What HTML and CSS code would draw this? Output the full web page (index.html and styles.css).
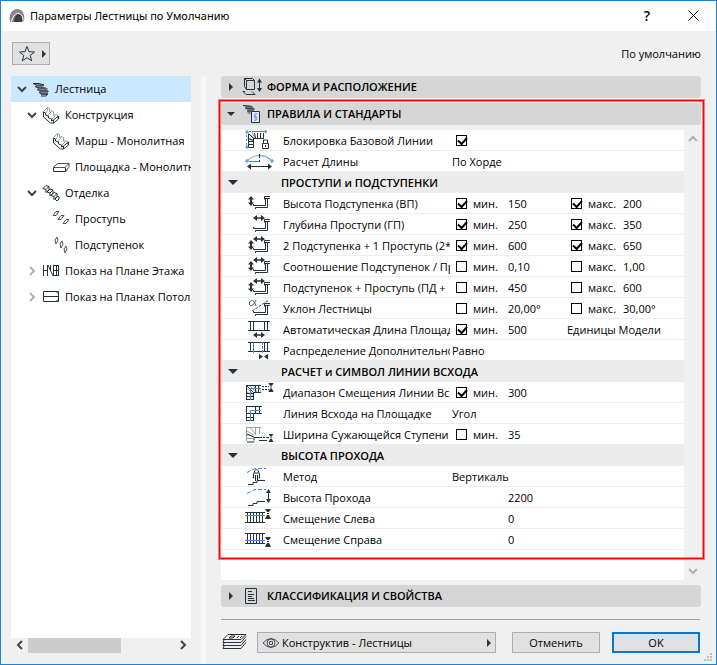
FILE: index.html
```html
<!DOCTYPE html>
<html lang="ru">
<head>
    <meta charset="UTF-8">
    <meta name="viewport" content="width=device-width, initial-scale=1.0">
    <title>Параметры Лестницы по Умолчанию</title>
    <link rel="stylesheet" href="styles.css">
</head>
<body>
    <svg class="sprite" aria-hidden="true">
        <symbol id="stair" viewBox="0 0 18 16">
            <path class="fill-mid" d="M1 2l4 2h7l-1 2 3 1h2l-1 2 2 1-2 4H9l-2-3 1-1-3-2 1-1-3-1 1-2z"/>
            <path d="M1 2.500l4 1.500h7M3 5.500l4 1.500h7M5 8.500l3 1.500h8M7 11.500l3 1.500h6M1 2.500h6l5 1.500M9 15h5l2-2"/>
        </symbol>
        <symbol id="flight" viewBox="0 0 18 18">
            <path class="grey" d="M1.500 5.500l4-4 2 1v3l2-1 2 1v4l2-1 2 1v3M5.500 1.500v3l-2 3M9.500 5.500L6 9v2M13.500 9.500L10 13v2"/>
            <path d="M1.500 6v5l7 6h3l5-4v-3l-5 4v3M1.500 6l2 1v2l3 1v2l3 1v2l2-1"/>
        </symbol>
        <symbol id="finish" viewBox="0 0 18 18">
            <path d="M1 4.500l3-3 3 1-3 3zM7 2.500v3l-3 3v-3M5 8l3-3 3 1-3 3zM11 6v3l-3 3V9M9 11.500l3-3 3 1-3 3zM15 9.500v3l-3 3v-3M13 15l3-3 1 1v2l-2 2z"/>
        </symbol>
        <symbol id="updown" viewBox="0 0 6 10">
            <path class="dark" d="M3 0l3 3.500H4v3h2L3 10 0 6.500h2v-3H0z"/>
        </symbol>
        <symbol id="leftright" viewBox="0 0 12 6">
            <path class="dark" d="M0 3l4-3v2.200h4V0l4 3-4 3V3.800H4V6z"/>
        </symbol>
        <symbol id="step" viewBox="0 0 17 14">
            <path d="M.5 9v1.500h12V4M2.500 14v-1.500h12V4M11.500 4.500v-3h5.500M12 3.500h5"/>
        </symbol>
        <symbol id="both" viewBox="0 0 30 21">
            <use href="#updown" x="4" y="5" width="6" height="10"/>
            <use href="#leftright" x="9" y="1" width="12" height="6"/>
            <use href="#step" x="9" y="4" width="17" height="14"/>
        </symbol>
        <symbol id="landing" viewBox="0 0 30 21">
            <path d="M4 2.500h22M4 11.500h22M6.500 2v10M9.500 2v10M20.500 2v10M23.500 2v10"/>
        </symbol>
        <symbol id="pinch" viewBox="0 0 6 10">
            <path class="dark" d="M0 0h6L4 3H2zM2 6h2l2 4H0zM2 4h2v1H2z"/>
        </symbol>
        <symbol id="ladder" viewBox="0 0 30 21">
            <path d="M1 4.500h20M1 14.500h20M3.500 4v11M6.500 4v11M9.500 4v11M12.500 4v11M15.500 4v11M18.500 4v11"/>
        </symbol>
        <symbol id="headroom" viewBox="0 0 30 21">
            <path class="blue dash" d="M3 6.500l8-4h11"/>
            <path d="M4 18.500h5v-2h4v-2h8"/>
        </symbol>
        <symbol id="down" viewBox="0 0 10 8">
            <path class="chevron" d="M1 2l4 4 4-4"/>
        </symbol>
    </svg>

    <div class="dialog">
        <header class="titlebar">
            <svg class="logo" viewBox="0 0 16 16" aria-hidden="true">
                <path class="logo-back" d="M1 14C-1 6 4 1 8 1c6 0 8 6 7 12l-3 1z"/>
                <path class="logo-front" d="M5 14c0-5 3-9 6-8 3 2 3 5 2 8z"/>
                <path class="logo-line" d="M2 14.500C4 8 7 4 10 5.500c3 1 4 4 4 7"/>
            </svg>
            <h1>Параметры Лестницы по Умолчанию</h1>
            <button type="button" class="title-btn" aria-label="Справка">?</button>
            <button type="button" class="title-btn" aria-label="Закрыть">
                <svg width="11" height="11" viewBox="0 0 11 11"><path class="cross" d="M.5.5l10 10M10.500.5l-10 10"/></svg>
            </button>
        </header>

        <div class="toolbar">
            <button type="button" class="favorites" aria-label="Избранное">
                <svg width="18" height="18" viewBox="0 0 18 18"><path d="M9 1.500l2 5.200 5.500.3-4.300 3.400 1.500 5.400L9 12.700l-4.700 3.100 1.500-5.400L1.500 7l5.500-.3z"/></svg>
                <span class="arrow-right"></span>
            </button>
            <span>По умолчанию</span>
        </div>

        <main class="columns">
            <nav class="tree">
                <ul class="tree-list">
                    <li class="level1 selected">
                        <svg class="twisty"><use href="#down"/></svg>
                        <svg class="tree-icon"><use href="#stair"/></svg>
                        <span>Лестница</span>
                    </li>
                    <li class="level2">
                        <svg class="twisty"><use href="#down"/></svg>
                        <svg class="tree-icon"><use href="#flight"/></svg>
                        <span>Конструкция</span>
                    </li>
                    <li class="level3">
                        <svg class="tree-icon"><use href="#flight"/></svg>
                        <span>Марш - Монолитная</span>
                    </li>
                    <li class="level3">
                        <svg class="tree-icon" viewBox="0 0 18 18"><path class="mid" d="M1 9.500l5-4h11l-4 4zM17 5.500v4"/><path d="M1.500 9.500v4h12l3-4M13.500 9.500v4"/></svg>
                        <span>Площадка - Монолитн</span>
                    </li>
                    <li class="level2">
                        <svg class="twisty"><use href="#down"/></svg>
                        <svg class="tree-icon"><use href="#finish"/></svg>
                        <span>Отделка</span>
                    </li>
                    <li class="level3">
                        <svg class="tree-icon" viewBox="0 0 18 18"><path class="mid" d="M1 5.500l3-4h3l-3 4zM6 9.500l3-4h3l-3 4zM11 13.500l3-4h3l-3 4z"/></svg>
                        <span>Проступь</span>
                    </li>
                    <li class="level3">
                        <svg class="tree-icon" viewBox="0 0 18 18"><path class="mid" d="M3 4l2-3 1 3-2 4zM8 8l2-3 1 3-2 4zM12 13l2-3 1 3-2 4z"/></svg>
                        <span>Подступенок</span>
                    </li>
                    <li class="level2">
                        <svg class="twisty" viewBox="0 0 10 10"><path class="chevron pale" d="M3 1l4 4-4 4"/></svg>
                        <svg class="tree-icon" viewBox="0 0 18 18"><path d="M1.500 3v11M5.500 3v11M1 8.500h5M6 3l5 11M8.500 3v6M11.500 3v11M14.500 3v11M16.500 3v11M11 3.500h6M11 13.500h6M11 8.500h6"/></svg>
                        <span>Показ на Плане Этажа</span>
                    </li>
                    <li class="level2">
                        <svg class="twisty" viewBox="0 0 10 10"><path class="chevron pale" d="M3 1l4 4-4 4"/></svg>
                        <svg class="tree-icon" viewBox="0 0 18 18"><path d="M1.500 3.500h15v10h-15zM1.500 8.500h15M14 3.500l2 2M14 13.500l2-2"/></svg>
                        <span>Показ на Планах Потол</span>
                    </li>
                </ul>
                <div class="hscroll">
                    <button type="button" aria-label="Влево"><svg width="8" height="10" viewBox="0 0 8 10"><path class="chevron" d="M6 1L2 5l4 4"/></svg></button>
                    <div class="hscroll-track"><div class="hscroll-thumb"></div></div>
                    <button type="button" aria-label="Вправо"><svg width="8" height="10" viewBox="0 0 8 10"><path class="chevron" d="M2 1l4 4-4 4"/></svg></button>
                </div>
            </nav>

            <div class="splitter"></div>

            <div class="settings">
                <button type="button" class="section">
                    <span class="arrow-right"></span>
                    <svg class="section-icon" viewBox="0 0 20 20"><path d="M4.500 3.500h8v9h-8zM4.500 3.500l-2-2v8l2 3M2.500 1.500h8l2 2M3 14.500h-2l3 3h9l-3-3M17.500 4v9"/><path class="dark" d="M15 5.500l2.500-4 2.500 4zM15 11l2.500 4 2.500-4z"/></svg>
                    ФОРМА И РАСПОЛОЖЕНИЕ
                </button>

                <button type="button" class="section">
                    <span class="arrow-down small"></span>
                    <svg class="section-icon" viewBox="0 0 20 20">
                        <path class="fill-mid" d="M1 1l9 1 3 3-1 2H9l-1 4-3-3 1-2-3-1 1-2z"/>
                        <path d="M1 1.500l9 1M3 4l9 1M5 7h5"/>
                        <path class="paper" d="M9.500 7.500h8v11h-8z"/>
                        <path class="blue" d="M15 10c-3-1-3 1-1.500 2s2 2 0 2M12 16c3 1 3-1 1.500-2s-2-2 0-2"/>
                    </svg>
                    ПРАВИЛА И СТАНДАРТЫ
                </button>

                <div class="panel">
                    <div class="rows">
                        <div class="row">
                            <svg class="icon" viewBox="0 0 30 21"><path class="grey" d="M4 3l6 5M3 8l7 2M8 2l3 6"/><path d="M4.500 4v14M9.500 8v10M4 17.500h5M4 14.500h5M4 11.500h5M4 8.500l5 2M10 8.500h10M19.500 3v6M16.500 3v6M13.500 3v6M10.500 3l1 5M5 4l5 5"/><path class="blue" d="M5 1.500h17M2.500 5v12" stroke-dasharray="2 2"/><path class="blue" d="M8 1.500h14M21 0l2 1.500-2 1.500M2 1h2v2H2zM2 16h2v2H2z"/><path class="white" d="M18.500 13.500h6v5h-6zM19.500 13v-3h4v3M21.500 15v2"/></svg>
                            <label class="name" for="lock">Блокировка Базовой Линии</label>
                            <span class="cell"><input type="checkbox" id="lock" checked></span>
                        </div>
                        <div class="row">
                            <svg class="icon" viewBox="0 0 30 21"><path class="grey" d="M4 9Q9 4 15 4.500"/><path class="blue" d="M15 4.500Q22 4 27 9M5 10.500h10M2 9h2v2H2zM27 9h2v2h-2z"/><path d="M15.500 3v4M15.500 9v2M4 15.500h23"/><path class="dark" d="M3 15.500l4-3v6zM28 15.500l-4-3v6z"/></svg>
                            <label class="name" for="length">Расчет Длины</label>
                            <select id="length"><option>По Хорде</option></select>
                        </div>

                        <h2 class="group"><span class="arrow-down"></span>ПРОСТУПИ и ПОДСТУПЕНКИ</h2>

                        <div class="row">
                            <svg class="icon" viewBox="0 0 30 21"><use href="#updown" x="4" y="3" width="6" height="10"/><use href="#step" x="9" y="2" width="17" height="14"/></svg>
                            <span class="name">Высота Подступенка (ВП)</span>
                            <span class="cell"><input type="checkbox" id="rise-min" checked><label for="rise-min">мин.</label><input type="text" value="150" aria-label="Высота, минимум"></span>
                            <span class="cell"><input type="checkbox" id="rise-max" checked><label for="rise-max">макс.</label><input type="text" value="200" aria-label="Высота, максимум"></span>
                        </div>
                        <div class="row">
                            <svg class="icon" viewBox="0 0 30 21"><use href="#leftright" x="9" y="1" width="12" height="6"/><use href="#step" x="9" y="4" width="17" height="14"/></svg>
                            <span class="name">Глубина Проступи (ГП)</span>
                            <span class="cell"><input type="checkbox" id="depth-min" checked><label for="depth-min">мин.</label><input type="text" value="250" aria-label="Глубина, минимум"></span>
                            <span class="cell"><input type="checkbox" id="depth-max" checked><label for="depth-max">макс.</label><input type="text" value="350" aria-label="Глубина, максимум"></span>
                        </div>
                        <div class="row">
                            <svg class="icon"><use href="#both"/></svg>
                            <span class="name">2 Подступенка + 1 Проступь (2*</span>
                            <span class="cell"><input type="checkbox" id="sum2-min" checked><label for="sum2-min">мин.</label><input type="text" value="600" aria-label="Сумма, минимум"></span>
                            <span class="cell"><input type="checkbox" id="sum2-max" checked><label for="sum2-max">макс.</label><input type="text" value="650" aria-label="Сумма, максимум"></span>
                        </div>
                        <div class="row">
                            <svg class="icon"><use href="#both"/></svg>
                            <span class="name">Соотношение Подступенок / Пр</span>
                            <span class="cell"><input type="checkbox" id="ratio-min"><label for="ratio-min">мин.</label><input type="text" value="0,10" aria-label="Соотношение, минимум"></span>
                            <span class="cell"><input type="checkbox" id="ratio-max"><label for="ratio-max">макс.</label><input type="text" value="1,00" aria-label="Соотношение, максимум"></span>
                        </div>
                        <div class="row">
                            <svg class="icon"><use href="#both"/></svg>
                            <span class="name">Подступенок + Проступь (ПД +</span>
                            <span class="cell"><input type="checkbox" id="sum-min"><label for="sum-min">мин.</label><input type="text" value="450" aria-label="Подступенок и проступь, минимум"></span>
                            <span class="cell"><input type="checkbox" id="sum-max"><label for="sum-max">макс.</label><input type="text" value="600" aria-label="Подступенок и проступь, максимум"></span>
                        </div>
                        <div class="row">
                            <svg class="icon" viewBox="0 0 30 21"><path class="mid" d="M12 2C9 9 5 9 5.500 5S10 1 12 8"/><path class="mid" d="M8 13L25 2" stroke-dasharray="3 1"/><use href="#step" x="9" y="4" width="17" height="14"/></svg>
                            <span class="name">Уклон Лестницы</span>
                            <span class="cell"><input type="checkbox" id="slope-min"><label for="slope-min">мин.</label><input type="text" value="20,00°" aria-label="Уклон, минимум"></span>
                            <span class="cell"><input type="checkbox" id="slope-max"><label for="slope-max">макс.</label><input type="text" value="30,00°" aria-label="Уклон, максимум"></span>
                        </div>
                        <div class="row">
                            <svg class="icon" viewBox="0 0 30 21"><use href="#landing"/><use href="#leftright" x="9" y="13" width="12" height="6"/></svg>
                            <span class="name">Автоматическая Длина Площад</span>
                            <span class="cell"><input type="checkbox" id="auto-min" checked><label for="auto-min">мин.</label><input type="text" value="500" aria-label="Длина площадки, минимум"></span>
                            <select aria-label="Единицы"><option>Единицы Модели</option></select>
                        </div>
                        <div class="row">
                            <svg class="icon" viewBox="0 0 30 21"><use href="#landing"/><path class="blue" d="M9.500 2v12M18.500 2v12" stroke-dasharray="3 1"/><path class="dark" d="M15 14l4 2.500-4 3zM24 14l-4 2.500 4 3z"/></svg>
                            <label class="name" for="extra">Распределение Дополнительно</label>
                            <select id="extra"><option>Равно</option></select>
                        </div>

                        <h2 class="group"><span class="arrow-down"></span>РАСЧЕТ и СИМВОЛ ЛИНИИ ВСХОДА</h2>

                        <div class="row">
                            <svg class="icon" viewBox="0 0 30 21"><path class="grey" d="M3 6l6 6M5 3l6 6M3 10l6 4M9 3l4 7M14 3l3 7"/><path d="M2.500 3v15M9.500 11v7M2 3.500h15M10 10.500h7M2 17.500h7M2 14.500h7M2 11.500h7M11.500 3v7M14.500 3v7M2 3l8 8"/><path class="blue" d="M6.500 18V6.500H17"/><path d="M18 4.500h7M18 7.500h7" stroke-dasharray="2 1"/><use href="#pinch" x="24" y="1" width="6" height="9"/></svg>
                            <span class="name">Диапазон Смещения Линии Вс</span>
                            <span class="cell"><input type="checkbox" id="range-min" checked><label for="range-min">мин.</label><input type="text" value="300" aria-label="Диапазон, минимум"></span>
                        </div>
                        <div class="row">
                            <svg class="icon" viewBox="0 0 30 21"><path d="M2.500 3v15M9.500 10v8M2 3.500h16M9 10.500h9M2 14.500h7M2 10.500h7M11.500 3v7M15.500 3v7M2 17.500h7"/><path class="blue" d="M6.500 18V7.500H17"/></svg>
                            <label class="name" for="walk">Линия Всхода на Площадке</label>
                            <select id="walk"><option>Угол</option></select>
                        </div>
                        <div class="row">
                            <svg class="icon" viewBox="0 0 30 21"><path class="grey" d="M2.500 3v14M2 3.500h15M11.500 3v8M15.500 3v7M6 3l6 8M3 7l7 4M3 11l6 1M3 14.500h7"/><path d="M3 10l7 3v5H3M10 13.500h15M15 16.500h9" stroke-dasharray="8 1 2 1"/><use href="#pinch" x="24" y="10" width="6" height="8"/></svg>
                            <span class="name">Ширина Сужающейся Ступени</span>
                            <span class="cell"><input type="checkbox" id="winder-min"><label for="winder-min">мин.</label><input type="text" value="35" aria-label="Ширина, минимум"></span>
                        </div>

                        <h2 class="group"><span class="arrow-down"></span>ВЫСОТА ПРОХОДА</h2>

                        <div class="row">
                            <svg class="icon" viewBox="0 0 30 21"><use href="#headroom"/><path d="M12.500 3l2 2v1l1 2v4h-1M12.500 3l-2 2v1l-1 2v4h1M10.500 7h4M11.500 15V9M13.500 15V9"/></svg>
                            <label class="name" for="method">Метод</label>
                            <select id="method"><option>Вертикаль</option></select>
                        </div>
                        <div class="row">
                            <svg class="icon" viewBox="0 0 30 21"><use href="#headroom"/><path d="M24.500 5v8"/><path class="dark" d="M22 6l2.500-4L27 6zM22 12l2.500 4 2.500-4z"/></svg>
                            <label class="name" for="height">Высота Прохода</label>
                            <span class="cell plain"><input type="text" id="height" value="2200"></span>
                        </div>
                        <div class="row">
                            <svg class="icon" viewBox="0 0 30 21"><use href="#ladder"/><path class="blue" d="M1 7.500h20"/><use href="#pinch" x="21" y="1" width="6" height="10"/></svg>
                            <label class="name" for="left">Смещение Слева</label>
                            <span class="cell plain"><input type="text" id="left" value="0"></span>
                        </div>
                        <div class="row">
                            <svg class="icon" viewBox="0 0 30 21"><use href="#ladder"/><path class="blue" d="M1 11.500h20"/><use href="#pinch" x="21" y="8" width="6" height="10"/></svg>
                            <label class="name" for="right">Смещение Справа</label>
                            <span class="cell plain"><input type="text" id="right" value="0"></span>
                        </div>
                    </div>
                    <div class="vscroll">
                        <svg width="10" height="8" viewBox="0 0 10 8"><path class="chevron pale" d="M1 6l4-4 4 4"/></svg>
                        <svg width="10" height="8" viewBox="0 0 10 8"><path class="chevron pale" d="M1 2l4 4 4-4"/></svg>
                    </div>
                    <div class="highlight"></div>
                </div>

                <button type="button" class="section">
                    <span class="arrow-right"></span>
                    <svg class="section-icon" viewBox="0 0 20 20"><path d="M3.500 2.500h11v15h-11zM6 5.500h4M6 8.500h6M6 10.500h4M6 12.500h6M6 14.500h7"/></svg>
                    КЛАССИФИКАЦИЯ И СВОЙСТВА
                </button>

                <footer class="footer">
                    <svg class="layers" viewBox="0 0 26 18"><path d="M2 7.500l5-5h18l-5 5zM3 8l-1 2.500h18l5-6M3 11l-1 2.500h18l5-6M3 14l-1 2.500h18l5-6M10 4h4l-2 2H8zM16 6l2-2M19 6l2-2"/></svg>
                    <button type="button" class="btn layer-btn">
                        <svg width="18" height="12" viewBox="0 0 18 12"><path class="mid" d="M1 6q8-9 16 0-8 9-16 0z"/><circle class="mid" cx="9" cy="6" r="4"/><path class="mid" d="M7.500 4.500h3v3h-3z"/></svg>
                        <span>Конструктив - Лестницы</span>
                        <span class="arrow-right"></span>
                    </button>
                    <button type="button" class="btn">Отменить</button>
                    <button type="button" class="btn primary">OK</button>
                </footer>
            </div>
        </main>
        <svg class="grip" width="9" height="9" viewBox="0 0 9 9"><path d="M6 0h2v2H6zM3 3h2v2H3zM6 3h2v2H6zM0 6h2v2H0zM3 6h2v2H3zM6 6h2v2H6z"/></svg>
    </div>
</body>
</html>
```
FILE: styles.css
```css
* {
    margin: 0;
    padding: 0;
    box-sizing: border-box;
}

body {
    font-family: "Open Sans", "Noto Sans", sans-serif;
    font-size: 11px;
    line-height: 16px;
    color: #000;
}

button, input, select {
    font: inherit;
    color: inherit;
    border: none;
    background: none;
}

svg {
    flex: none;
    fill: none;
    stroke: #26323a;
}

.sprite {
    position: absolute;
    width: 0;
    height: 0;
}

.dark {
    fill: #26323a;
    stroke: none;
}

.mid {
    stroke: #4a5359;
}

.fill-mid {
    fill: #777f84;
    stroke: none;
}

.grey {
    stroke: #9b9fa2;
}

.blue {
    stroke: #3b86e8;
}

.dash {
    stroke-dasharray: 4 2;
}

.white {
    fill: #fff;
}

.paper {
    fill: #e4e8ec;
}

.chevron {
    stroke: #444;
    stroke-width: 2;
}

.chevron.pale {
    stroke: #b0b0b0;
}

.dialog {
    position: relative;
    display: flex;
    flex-direction: column;
    min-height: 100vh;
    background: #f0f0f0;
    border: 1px solid #1883d7;
}

/* title bar */
.titlebar {
    display: flex;
    align-items: center;
    height: 30px;
    padding-left: 8px;
    background: #fff;
}

.logo {
    width: 16px;
    height: 16px;
    margin-right: 5px;
    stroke: none;
}

.logo-back {
    fill: #85858c;
}

.logo-front {
    fill: #3e3d48;
}

.logo-line {
    stroke: #fff;
}

.titlebar h1 {
    flex: 1;
    font-family: "Noto Sans", sans-serif;
    font-size: 11px;
    font-weight: normal;
}

.title-btn {
    width: 46px;
    height: 30px;
    font-size: 14px;
    font-weight: 600;
}

.cross {
    stroke: #000;
}

/* toolbar */
.toolbar {
    display: flex;
    align-items: center;
    justify-content: space-between;
    height: 45px;
    padding: 0 15px 0 11px;
}

.favorites {
    display: flex;
    align-items: center;
    justify-content: space-between;
    width: 38px;
    height: 23px;
    padding: 0 3px 0 5px;
    background: #e1e1e1;
    border: 1px solid #adadad;
}

.arrow-right {
    border: 4px solid transparent;
    border-left: 4px solid #333;
    border-right: none;
}

.arrow-down {
    border: 5px solid transparent;
    border-top: 5px solid #26323a;
    border-bottom: none;
}

.arrow-down.small {
    border-width: 4px 4px 0;
}

.columns {
    display: flex;
    flex: 1;
    padding: 0 15px 0 10px;
}

/* tree */
.tree {
    display: flex;
    flex-direction: column;
    width: 180px;
    padding-bottom: 11px;
}

.tree-list {
    flex: 1;
    list-style: none;
    background: #fff;
    overflow: hidden;
}

.tree-list li {
    display: flex;
    align-items: center;
    height: 26px;
    white-space: nowrap;
}

.tree-list .selected {
    background: #cce8ff;
}

.level1 {
    padding-left: 6px;
}

.level2 {
    padding-left: 16px;
}

.level3 {
    padding-left: 40px;
}

.twisty {
    width: 10px;
    height: 10px;
    margin-right: 4px;
}

.tree-icon {
    width: 18px;
    height: 18px;
    margin: 0 5px 0 1px;
}

.hscroll {
    display: flex;
    height: 15px;
}

.hscroll button {
    width: 17px;
}

.hscroll-track {
    flex: 1;
}

.hscroll-thumb {
    width: 64%;
    height: 15px;
    background: #cdcdcd;
}

.splitter {
    width: 5px;
    margin: 0 15px 0 10px;
    background: #f7f7f7;
}

/* settings */
.settings {
    display: flex;
    flex: 1;
    flex-direction: column;
    gap: 5px;
    min-width: 0;
}

.section {
    display: flex;
    align-items: center;
    width: 100%;
    height: 22px;
    padding-left: 6px;
    background: #d6d6d6;
    border-radius: 3px;
    font-weight: 600;
    text-align: left;
}

.section .arrow-right {
    margin: 0 2px;
}

.section-icon {
    width: 20px;
    height: 20px;
    margin: 0 5px 0 7px;
}

.panel {
    position: relative;
    display: flex;
    flex: 1;
}

.rows {
    flex: 1;
    min-width: 0;
    background: #fff;
}

.row {
    display: grid;
    grid-template-columns: 60px 167px 113px 1fr;
    column-gap: 2px;
    align-items: center;
    height: 21px;
    border-bottom: 1px solid #ececec;
}

.icon {
    width: 30px;
    height: 21px;
    margin-left: 23px;
}

.name {
    overflow: hidden;
    white-space: nowrap;
}

.cell {
    display: flex;
    align-items: center;
    padding-left: 4px;
}

.cell label {
    width: 35px;
}

.plain {
    padding-left: 56px;
}

.row select {
    appearance: none;
    width: 115px;
}

input[type="text"] {
    width: 50px;
    height: 16px;
}

input[type="checkbox"] {
    appearance: none;
    flex: none;
    width: 11px;
    height: 11px;
    margin-right: 6px;
    background: #fff;
    border: 1px solid #000;
}

input[type="checkbox"]:checked::before {
    content: "";
    display: block;
    width: 7px;
    height: 4px;
    margin: 1px;
    border-left: 2px solid #000;
    border-bottom: 2px solid #000;
    transform: rotate(-48deg);
}

.group {
    display: flex;
    align-items: center;
    gap: 43px;
    height: 21px;
    padding-left: 7px;
    background: #ececec;
    font-size: 11px;
    font-weight: 600;
}

.vscroll {
    display: flex;
    flex-direction: column;
    align-items: center;
    justify-content: space-between;
    width: 17px;
    padding: 5px 0;
}

.highlight {
    position: absolute;
    top: -30px;
    right: -3px;
    bottom: 21px;
    left: -2px;
    border: 1px solid #f00;
    box-shadow: 0 0 0 1px #ff7f7f, inset 0 0 0 1px #ff7f7f;
    pointer-events: none;
}

/* footer */
.footer {
    display: flex;
    align-items: flex-start;
    gap: 12px;
    height: 45px;
    margin: 7px 1px 0 0;
    padding-top: 12px;
    border-top: 1px solid #a0a0a0;
}

.layers {
    width: 26px;
    height: 18px;
    margin-right: -2px;
}

.btn {
    width: 88px;
    height: 21px;
    background: #e1e1e1;
    border: 1px solid #adadad;
}

.layer-btn {
    display: flex;
    flex: 1;
    align-items: center;
    gap: 2px;
    margin-right: 4px;
    padding: 0 4px;
}

.layer-btn .arrow-right {
    margin-left: auto;
}

.primary {
    border: 2px solid #0078d7;
}

.grip {
    position: absolute;
    right: 3px;
    bottom: 2px;
    fill: #bfbfbf;
    stroke: none;
}
```
